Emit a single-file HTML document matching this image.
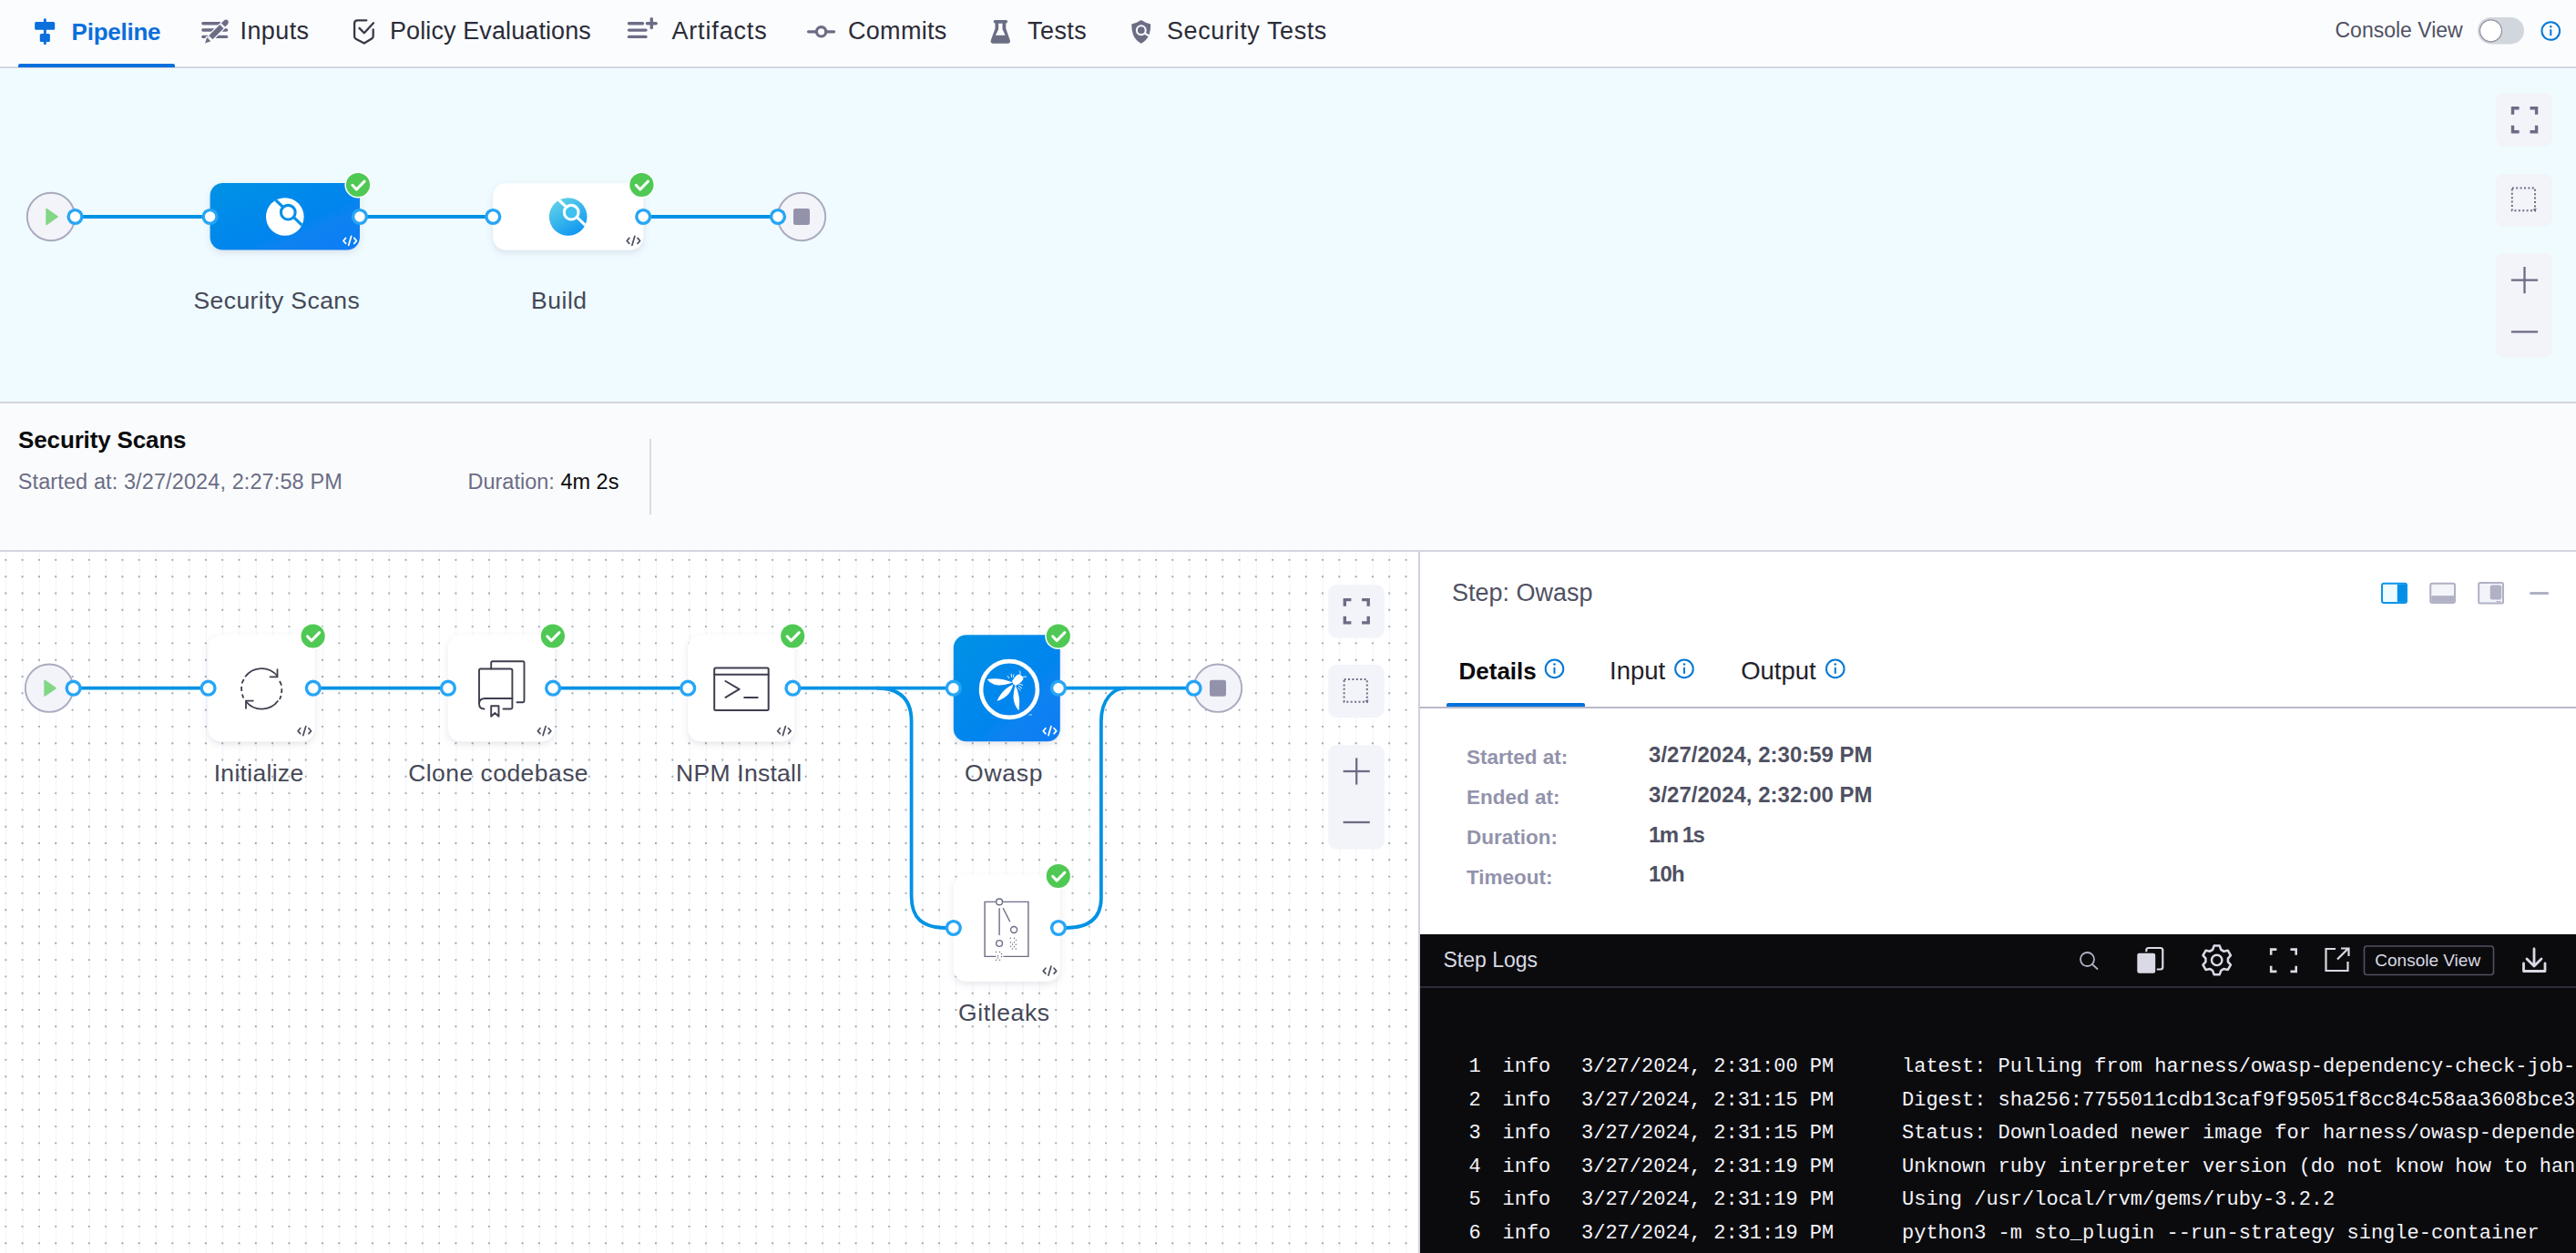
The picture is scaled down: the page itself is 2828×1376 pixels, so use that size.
<!DOCTYPE html>
<html><head><meta charset="utf-8"><title>Pipeline</title>
<style>
html,body{margin:0;padding:0;width:2828px;height:1376px;overflow:hidden;background:#fff;}
body{position:relative;font-family:"Liberation Sans", sans-serif;}
.t{position:absolute;white-space:pre;}
svg{position:absolute;left:0;top:0;overflow:visible;}
</style></head><body>
<div style="position:absolute;left:0px;top:0px;width:2828px;height:74px;background:#fbfcfe"></div>
<div style="position:absolute;left:0px;top:72px;width:2828px;height:1.3px;background:#ffffff"></div>
<div style="position:absolute;left:0px;top:73.3px;width:2828px;height:1.9px;background:#d4d5e1"></div>
<div style="position:absolute;left:0px;top:75.2px;width:2828px;height:366.3px;background:#effbff"></div>
<div style="position:absolute;left:0px;top:441px;width:2828px;height:1.5px;background:#d4d5e1"></div>
<div style="position:absolute;left:0px;top:442.5px;width:2828px;height:162px;background:#fafbfd"></div>
<div style="position:absolute;left:0px;top:604px;width:2828px;height:2px;background:#d4d5e1"></div>
<div style="position:absolute;left:0px;top:606px;width:1557px;height:770px;background:#ffffff"></div>
<div style="position:absolute;left:1557px;top:606px;width:1.5px;height:770px;background:#d0d1de"></div>
<div style="position:absolute;left:1558.5px;top:606px;width:1269.5px;height:420px;background:#ffffff"></div>
<div style="position:absolute;left:1558.5px;top:1026px;width:1269.5px;height:350px;background:#0b0b0d"></div>
<div class="t" style="left:78.6px;top:21.6px;font-size:26px;line-height:26px;color:#0b6fdc;font-weight:700;font-family:'Liberation Sans', sans-serif;letter-spacing:-0.25px">Pipeline</div>
<div class="t" style="left:263.5px;top:21.1px;font-size:27px;line-height:27px;color:#2b2c38;font-weight:400;font-family:'Liberation Sans', sans-serif;letter-spacing:0.4px">Inputs</div>
<div class="t" style="left:428.0px;top:21.1px;font-size:27px;line-height:27px;color:#2b2c38;font-weight:400;font-family:'Liberation Sans', sans-serif;letter-spacing:0.1px">Policy Evaluations</div>
<div class="t" style="left:737.4px;top:21.1px;font-size:27px;line-height:27px;color:#2b2c38;font-weight:400;font-family:'Liberation Sans', sans-serif;letter-spacing:0.85px">Artifacts</div>
<div class="t" style="left:931.0px;top:21.1px;font-size:27px;line-height:27px;color:#2b2c38;font-weight:400;font-family:'Liberation Sans', sans-serif;letter-spacing:0.3px">Commits</div>
<div class="t" style="left:1128.1px;top:21.1px;font-size:27px;line-height:27px;color:#2b2c38;font-weight:400;font-family:'Liberation Sans', sans-serif;letter-spacing:0.4px">Tests</div>
<div class="t" style="left:1281.0px;top:21.1px;font-size:27px;line-height:27px;color:#2b2c38;font-weight:400;font-family:'Liberation Sans', sans-serif;letter-spacing:0.6px">Security Tests</div>
<div style="position:absolute;left:20.2px;top:69.6px;width:171.7px;height:4.2px;background:#0b6fdc;border-radius:2px 2px 0 0"></div>
<svg width="2828" height="80" viewBox="0 0 2828 80">
 <!-- pipeline icon -->
 <g fill="#0b6fdc">
  <rect x="47.9" y="20.2" width="2.9" height="29" rx="1.4"/>
  <rect x="38.2" y="24" width="22" height="8.8" rx="1.5"/>
  <rect x="43.8" y="37" width="11.1" height="8.9" rx="1.5"/>
 </g>
 <!-- inputs icon -->
 <g stroke="#6b6d85" stroke-width="3.4" stroke-linecap="round" fill="none">
  <line x1="222.9" y1="25.8" x2="243" y2="25.8"/>
  <line x1="222.9" y1="33" x2="248.6" y2="33"/>
  <line x1="222.9" y1="40.4" x2="248.6" y2="40.4"/>
 </g>
 <g fill="#6b6d85" stroke="#fafbfd" stroke-width="2.6" paint-order="stroke" stroke-linejoin="round">
  <path d="M229.4 39 L241.4 27.1 L245.5 31.2 L233.4 43.3 Z"/>
  <path d="M225.1 47.6 L227.1 41 L231.4 45.2 Z"/>
  <path d="M242.9 25.5 L246 22.4 Q248.2 20.6 250.1 22.5 Q251.8 24.4 250 26.5 L247.2 29.6 Z"/>
 </g>
 <!-- policy icon -->
 <g stroke="#383946" stroke-width="2.3" stroke-linecap="round" stroke-linejoin="round" fill="none">
  <path d="M402.3 22.3 H392.5 q-3.4 0 -3.4 3.4 V40 q0 1.8 1.6 2.7 L399.8 47.5 L408 42.6 q1.7 -1 1.7 -2.8 V32.5"/>
  <path d="M394.5 30.9 L399.8 36.3 L410 25.3"/>
 </g>
 <!-- artifacts icon -->
 <g stroke="#6b6d85" stroke-width="3.4" stroke-linecap="round" fill="none">
  <line x1="690.5" y1="25.7" x2="705.5" y2="25.7"/>
  <line x1="690.5" y1="33.1" x2="709" y2="33.1"/>
  <line x1="690.5" y1="40.4" x2="709" y2="40.4"/>
  <line x1="715.3" y1="20.8" x2="715.3" y2="30.6"/>
  <line x1="710.4" y1="25.7" x2="720.2" y2="25.7"/>
 </g>
 <!-- commits icon -->
 <g stroke="#6b6d85" stroke-width="3.2" fill="none">
  <circle cx="901.6" cy="34.8" r="5.2"/>
  <line x1="887.5" y1="34.8" x2="896.2" y2="34.8" stroke-linecap="round"/>
  <line x1="907" y1="34.8" x2="915.6" y2="34.8" stroke-linecap="round"/>
 </g>
 <!-- tests icon -->
 <path fill="#6b6d85" fill-rule="evenodd" d="M1092.3 22.1 H1104.9 q1.2 0 1.2 1.7 q0 1.6 -1.8 1.7 V31.2 L1108.9 44.6 q0.6 3.1 -2.6 3.1 H1090.3 q-3.2 0 -2.6 -3.1 L1092.5 31.2 V25.5 q-1.8 -0.1 -1.8 -1.7 q0 -1.7 1.6 -1.7 z M1096.2 25.8 V32 L1093 38.7 H1103.6 L1100.5 32 V25.8 z"/>
 <!-- security tests icon -->
 <path fill="#6b6d85" d="M1252.8 22.1 Q1257.5 25.3 1262.6 26.3 Q1263.3 26.5 1263.2 27.3 Q1263.2 34 1261.5 38.5 Q1258.8 44.5 1252.8 47.8 Q1246.8 44.5 1244.1 38.5 Q1242.3 34 1242.3 27.3 Q1242.2 26.5 1243 26.3 Q1248.1 25.3 1252.8 22.1 Z"/>
 <circle cx="1252.8" cy="33.2" r="4.9" fill="none" stroke="#fafbfd" stroke-width="2.1"/>
 <circle cx="1252.8" cy="33.2" r="2.9" fill="#6b6d85"/>
 <line x1="1256.5" y1="36.5" x2="1262.5" y2="40" stroke="#fafbfd" stroke-width="2.1"/>
 <!-- toggle -->
 <rect x="2720" y="19" width="51" height="29.4" rx="14.7" fill="#d2d7de"/>
 <circle cx="2734.5" cy="33.8" r="12" fill="#ffffff" stroke="#8d8f9d" stroke-width="1.2"/>
 <!-- info -->
 <circle cx="2800.3" cy="34" r="9.8" fill="none" stroke="#0278d5" stroke-width="2"/>
 <rect x="2799.3" y="32.2" width="2" height="7" fill="#0278d5"/>
 <circle cx="2800.3" cy="29.3" r="1.2" fill="#0278d5"/>
</svg>
<div class="t" style="left:2563.5px;top:21.9px;font-size:23px;line-height:23px;color:#4f5162;font-weight:400;font-family:'Liberation Sans', sans-serif;">Console View</div>
<svg width="2828" height="1376" viewBox="0 0 2828 1376">
<defs>
 <linearGradient id="gblue" x1="0" y1="0" x2="1" y2="1">
  <stop offset="0" stop-color="#0092e4"/><stop offset="1" stop-color="#0a7cf6"/>
 </linearGradient>
 <linearGradient id="gcyan" x1="0.2" y1="0" x2="0.8" y2="1">
  <stop offset="0" stop-color="#62d5e6"/><stop offset="1" stop-color="#0b93f3"/>
 </linearGradient>
 <filter id="sh" x="-20%" y="-20%" width="140%" height="150%">
  <feDropShadow dx="0" dy="3" stdDeviation="3.5" flood-color="#606080" flood-opacity="0.16"/>
 </filter>
 <pattern id="dots" x="5.9" y="614.9" width="18.3" height="18.3" patternUnits="userSpaceOnUse">
  <rect x="-1.2" y="-1.2" width="2.4" height="2.4" fill="#9c9dae"/>
 </pattern>
</defs>

<line x1="82.5" y1="238" x2="230.6" y2="238" stroke="#0092e4" stroke-width="3.8"/>
<line x1="395" y1="238" x2="541.3" y2="238" stroke="#0092e4" stroke-width="3.8"/>
<line x1="706.2" y1="238" x2="854" y2="238" stroke="#0092e4" stroke-width="3.8"/>
<circle cx="56" cy="238" r="26.2" fill="#f3f3fa" stroke="#a9aabd" stroke-width="1.9"/><path d="M50.3 229.8 Q50.3 228.4 51.6 229.1 L63.4 237.2 Q64.4 238.0 63.4 238.8 L51.6 246.9 Q50.3 247.6 50.3 246.2 Z" fill="#82d785"/>
<circle cx="880" cy="238" r="26.2" fill="#f3f3fa" stroke="#a9aabd" stroke-width="1.9"/><rect x="871.0" y="229.0" width="18" height="18" rx="2.2" fill="#9293ab"/>
<rect x="230.6" y="201" width="164.4" height="73.5" rx="14" fill="url(#gblue)" filter="url(#sh)"/>
<rect x="541.3" y="201.3" width="164.9" height="73.3" rx="14" fill="#fff" filter="url(#sh)"/>
<g>
 <clipPath id="c1"><circle cx="312.8" cy="238" r="20.8"/></clipPath>
 <circle cx="312.8" cy="238" r="20.8" fill="#fff"/>
 <line x1="298" y1="215.3" x2="336" y2="251.5" stroke="#0490e8" stroke-width="3.2" clip-path="url(#c1)"/>
 <circle cx="316.3" cy="233.2" r="7.85" fill="#fff" stroke="#0490e8" stroke-width="3.1"/>
</g>
<g>
 <clipPath id="c2"><circle cx="623.7" cy="238" r="20.8"/></clipPath>
 <circle cx="623.7" cy="238" r="20.8" fill="url(#gcyan)"/>
 <line x1="609" y1="215.3" x2="647" y2="251.5" stroke="#fff" stroke-width="3.2" clip-path="url(#c2)"/>
 <circle cx="627.2" cy="233.2" r="7.85" fill="#3ec1ee" stroke="#fff" stroke-width="3.1"/>
</g>
<g fill="none" stroke="#ffffff" stroke-width="1.75" stroke-linecap="round" stroke-linejoin="round"><path d="M379.6 261.4 L377.0 264.5 L379.6 267.4"/><path d="M388.8 261.4 L391.4 264.5 L388.8 267.4"/><path d="M385.7 259.3 L382.7 269.3"/></g>
<g fill="none" stroke="#4f5162" stroke-width="1.75" stroke-linecap="round" stroke-linejoin="round"><path d="M690.8 261.4 L688.2 264.5 L690.8 267.4"/><path d="M700.0 261.4 L702.6 264.5 L700.0 267.4"/><path d="M696.9 259.3 L693.9 269.3"/></g>
<circle cx="82.5" cy="238" r="7.4" fill="#fff" stroke="#27a5f5" stroke-width="3.4"/>
<circle cx="230.6" cy="238" r="7.4" fill="#fff" stroke="#27a5f5" stroke-width="3.4"/>
<circle cx="395" cy="238" r="7.4" fill="#fff" stroke="#27a5f5" stroke-width="3.4"/>
<circle cx="541.3" cy="238" r="7.4" fill="#fff" stroke="#27a5f5" stroke-width="3.4"/>
<circle cx="706.2" cy="238" r="7.4" fill="#fff" stroke="#27a5f5" stroke-width="3.4"/>
<circle cx="854" cy="238" r="7.4" fill="#fff" stroke="#27a5f5" stroke-width="3.4"/>
<circle cx="393" cy="203" r="14.6" fill="#fff"/><circle cx="393" cy="203" r="13.1" fill="#4fc954"/><path d="M386.9 203.3 L391.3 208.1 L400.1 199.1" fill="none" stroke="#fff" stroke-width="3" stroke-linecap="round" stroke-linejoin="round"/>
<circle cx="704.4" cy="203" r="14.6" fill="#fff"/><circle cx="704.4" cy="203" r="13.1" fill="#4fc954"/><path d="M698.3 203.3 L702.7 208.1 L711.5 199.1" fill="none" stroke="#fff" stroke-width="3" stroke-linecap="round" stroke-linejoin="round"/>
<rect x="2740" y="102" width="62" height="58.4" rx="9" fill="#f3f3fa"/>
<rect x="2740" y="191" width="62" height="57.5" rx="9" fill="#f3f3fa"/>
<rect x="2740" y="278" width="62" height="114.7" rx="9" fill="#f3f3fa"/>
<g fill="none" stroke="#6b6d85" stroke-width="3.4" stroke-linecap="butt"><path d="M2758.5 125.8 V118.7 H2765.6"/><path d="M2777.5 118.7 H2784.6 V125.8"/><path d="M2758.5 137.7 V144.8 H2765.6"/><path d="M2777.5 144.8 H2784.6 V137.7"/></g>
<rect x="2757.8" y="206.6" width="25.2" height="24.6" fill="none" stroke="#6b6d85" stroke-width="2" stroke-dasharray="2 2.4"/><path d="M2780.5 229.7 l3 3 l1.2 -4 z" fill="#6b6d85"/>
<g stroke="#6b6d85" stroke-width="2.3"><line x1="2756.9" y1="307.6" x2="2786.1" y2="307.6"/><line x1="2771.5" y1="293.0" x2="2771.5" y2="322.2"/></g>
<line x1="2756.9" y1="364.4" x2="2786.1" y2="364.4" stroke="#6b6d85" stroke-width="2.3"/>
</svg>
<div class="t" style="left:212.5px;top:317.1px;font-size:26.5px;line-height:26.5px;color:#464857;font-weight:400;font-family:'Liberation Sans', sans-serif;letter-spacing:0.42px">Security Scans</div>
<div class="t" style="left:583.1px;top:317.1px;font-size:26.5px;line-height:26.5px;color:#464857;font-weight:400;font-family:'Liberation Sans', sans-serif;letter-spacing:0.5px">Build</div>
<div class="t" style="left:20.1px;top:470.3px;font-size:26px;line-height:26px;color:#0b0b0d;font-weight:700;font-family:'Liberation Sans', sans-serif;letter-spacing:-0.15px">Security Scans</div>
<div class="t" style="left:19.8px;top:517.5px;font-size:23.5px;line-height:23.5px;color:#6b6d85;font-weight:400;font-family:'Liberation Sans', sans-serif;letter-spacing:0.1px">Started at: 3/27/2024, 2:27:58 PM</div>
<div class="t" style="left:513.5px;top:517.5px;font-size:23.5px;line-height:23.5px;color:#6b6d85;font-weight:400;font-family:'Liberation Sans', sans-serif;">Duration: <span style="color:#0b0b0d">4m 2s</span></div>
<div style="position:absolute;left:713.3px;top:482px;width:1.5px;height:83px;background:#d9dae5"></div>
<svg width="2828" height="1376" viewBox="0 0 2828 1376">
<defs><pattern id="vl" x="6.3" y="0" width="18.3" height="20" patternUnits="userSpaceOnUse"><rect x="-0.8" y="0" width="1.6" height="20" fill="#e9f5fc"/></pattern></defs>
<rect x="0" y="606" width="1557" height="770" fill="url(#vl)"/>
<path d="M5.35 614.90H1557M5.35 633.20H1557M5.35 651.50H1557M5.35 669.80H1557M5.35 688.10H1557M5.35 706.40H1557M5.35 724.70H1557M5.35 743.00H1557M5.35 761.30H1557M5.35 779.60H1557M5.35 797.90H1557M5.35 816.20H1557M5.35 834.50H1557M5.35 852.80H1557M5.35 871.10H1557M5.35 889.40H1557M5.35 907.70H1557M5.35 926.00H1557M5.35 944.30H1557M5.35 962.60H1557M5.35 980.90H1557M5.35 999.20H1557M5.35 1017.50H1557M5.35 1035.80H1557M5.35 1054.10H1557M5.35 1072.40H1557M5.35 1090.70H1557M5.35 1109.00H1557M5.35 1127.30H1557M5.35 1145.60H1557M5.35 1163.90H1557M5.35 1182.20H1557M5.35 1200.50H1557M5.35 1218.80H1557M5.35 1237.10H1557M5.35 1255.40H1557M5.35 1273.70H1557M5.35 1292.00H1557M5.35 1310.30H1557M5.35 1328.60H1557M5.35 1346.90H1557M5.35 1365.20H1557" stroke="#a3a5ab" stroke-width="1.9" stroke-dasharray="1.9 16.4"/>
<line x1="80.6" y1="755.7" x2="228.6" y2="755.7" stroke="#0092e4" stroke-width="3.8"/>
<line x1="345.6" y1="755.7" x2="491.9" y2="755.7" stroke="#0092e4" stroke-width="3.8"/>
<line x1="608.9" y1="755.7" x2="755.2" y2="755.7" stroke="#0092e4" stroke-width="3.8"/>
<line x1="872.2" y1="755.7" x2="1046.8" y2="755.7" stroke="#0092e4" stroke-width="3.8"/>
<line x1="1163.8" y1="755.7" x2="1310.6" y2="755.7" stroke="#0092e4" stroke-width="3.8"/>
<path d="M962 755.7 C988 755.7 1000.6 768 1000.6 792 V984 C1000.6 1008 1012 1019 1040 1019" fill="none" stroke="#0092e4" stroke-width="3.8"/>
<path d="M1236 755.7 C1222 755.7 1208.9 768 1208.9 792 V986 C1208.9 1008 1196 1019 1170 1019" fill="none" stroke="#0092e4" stroke-width="3.8"/>
<line x1="1040" y1="1019" x2="1046.8" y2="1019" stroke="#0092e4" stroke-width="3.8"/>
<circle cx="54" cy="755.7" r="26.2" fill="#f3f3fa" stroke="#a9aabd" stroke-width="1.9"/><path d="M48.3 747.5 Q48.3 746.1 49.6 746.8 L61.4 754.9 Q62.4 755.7 61.4 756.5 L49.6 764.6 Q48.3 765.3 48.3 763.9 Z" fill="#82d785"/>
<circle cx="1337" cy="755.7" r="26.2" fill="#f3f3fa" stroke="#a9aabd" stroke-width="1.9"/><rect x="1328.0" y="746.7" width="18" height="18" rx="2.2" fill="#9293ab"/>
<rect x="228.6" y="697.3" width="117" height="117" rx="14" fill="#fff" filter="url(#sh)"/>
<rect x="491.9" y="697.3" width="117" height="117" rx="14" fill="#fff" filter="url(#sh)"/>
<rect x="755.2" y="697.3" width="117" height="117" rx="14" fill="#fff" filter="url(#sh)"/>
<rect x="1046.8" y="697.3" width="117" height="117" rx="14" fill="url(#gblue)" filter="url(#sh)"/>
<rect x="1046.8" y="960.8" width="117" height="117" rx="14" fill="#fff" filter="url(#sh)"/>
<g fill="none" stroke="#3d3f4e" stroke-width="1.8" stroke-linecap="butt">
 <path d="M269.2 743.3 A22.2 22.2 0 0 1 304.5 742.5"/>
 <path d="M305.3 769.5 A22.2 22.2 0 0 1 270 770.2"/>
 <path d="M267.7 746 A22.2 22.2 0 0 0 265.6 750.5 M265.2 754 A22.2 22.2 0 0 0 265.3 759 M266 762.5 A22.2 22.2 0 0 0 267.3 766.5" />
 <path d="M307 748 A22.2 22.2 0 0 1 309 752.7 M309.3 756.2 A22.2 22.2 0 0 1 309 761 M308.5 764 A22.2 22.2 0 0 1 307 768" />
 <path d="M304.5 734.4 V743.3 H295.8"/>
 <path d="M270 778.4 V769.7 H278.5"/>
</g>
<g fill="none" stroke="#3d3f4e" stroke-width="1.9" stroke-linecap="round" stroke-linejoin="round">
 <path d="M539.2 734.5 V727.8 q0 -1.6 1.6 -1.6 H573.9 q1.6 0 1.6 1.6 V769.6 q0 1.6 -1.6 1.6 H567.5"/>
 <path d="M526 771 V736.1 q0 -1.6 1.6 -1.6 H560.8 q1.6 0 1.6 1.6 V777 q0 1.5 -1.5 1.5 H552.5"/>
 <path d="M562.4 767 H532.5 q-6.5 0 -6.5 5.8 q0 5.7 5.5 5.7"/>
 <path d="M539.2 786.8 V775.3 H547.5 V786.8 L543.35 783 Z"/>
</g>
<g fill="none" stroke="#3d3f4e" stroke-width="2" stroke-linecap="round" stroke-linejoin="round">
 <rect x="784.2" y="733.4" width="59.5" height="46.6" rx="1.5"/>
 <line x1="784.2" y1="740.7" x2="843.7" y2="740.7"/>
 <path d="M796.5 748 L811.6 756.9 L796.5 765.8"/>
 <line x1="817.2" y1="766.1" x2="831.7" y2="766.1"/>
</g>
<g fill="#fff">
 <circle cx="1108" cy="757" r="30.9" fill="none" stroke="#fff" stroke-width="4.6"/>
 <path d="M1083.7 745.9 Q1097 743.5 1112 749.5 Q1098 754 1091 751.5 Q1086 749.5 1083.7 745.9 Z"/>
 <path d="M1094.5 769.8 Q1100 757 1112.5 751.5 Q1109.5 762 1102 766.5 Q1098 769 1094.5 769.8 Z"/>
 <path d="M1118.5 780.5 Q1113 774 1112.5 766 Q1113 757 1114.8 752.5 Q1118.5 760 1119.2 770 Z"/>
 <path d="M1111 748 Q1115 741.5 1118.3 740.5 Q1122.5 741.5 1123.5 745.5 Q1121 750 1115 753 Q1112 752 1111 748 Z"/>
 <rect x="1129.5" y="784.5" width="3.5" height="0.9" fill="#fff" opacity="0.8"/>
 <g stroke="#fff" stroke-width="0.9" fill="none">
  <path d="M1108 745 L1106 742 M1110.5 744 L1110.2 739.8 M1112.5 744 L1113 740.5"/>
  <path d="M1120 741 Q1120.5 737 1119 736.5 M1122.5 743.5 L1127 743"/>
  <path d="M1118 753 L1122 756 M1118.5 751 L1123 752.5 M1117.5 755 L1120.5 758.5"/>
 </g>
</g>
<g fill="none" stroke="#6b6d85" stroke-width="1.4">
 <path d="M1093.6 990.4 H1081.1 V1050.4 H1093.5 M1100.5 990.4 H1128.9 V1050.4 H1101.5"/>
 <circle cx="1097.1" cy="990.4" r="3.4"/>
 <line x1="1097.1" y1="997.3" x2="1097.1" y2="1027"/>
 <line x1="1101.2" y1="997.3" x2="1108.8" y2="1012.3"/>
 <circle cx="1113.1" cy="1021" r="3.5"/>
 <circle cx="1097.1" cy="1036" r="3.4"/>
</g>
<g fill="#6b6d85">
 <circle cx="1109.2" cy="1030.2" r="0.75"/><circle cx="1113.5" cy="1030.2" r="0.75"/><circle cx="1115.5" cy="1032.5" r="0.75"/>
 <circle cx="1109.5" cy="1034.8" r="0.75"/><circle cx="1113.5" cy="1034.8" r="0.75"/><circle cx="1111.5" cy="1037" r="0.75"/>
 <circle cx="1115.3" cy="1037.2" r="0.75"/><circle cx="1109.5" cy="1039.3" r="0.75"/><circle cx="1113.5" cy="1039.8" r="0.75"/>
 <circle cx="1111.5" cy="1042" r="0.75"/><circle cx="1115.3" cy="1042" r="0.75"/>
 <circle cx="1093.5" cy="1045.5" r="0.75"/><circle cx="1097.5" cy="1045.5" r="0.75"/><circle cx="1099.5" cy="1047.5" r="0.75"/>
 <circle cx="1095.5" cy="1049.8" r="0.75"/><circle cx="1099.5" cy="1050.5" r="0.75"/><circle cx="1093.5" cy="1054.2" r="0.75"/>
 <circle cx="1097.5" cy="1054.2" r="0.75"/><circle cx="1095.5" cy="1052" r="0.75"/>
</g>
<g fill="none" stroke="#4f5162" stroke-width="1.75" stroke-linecap="round" stroke-linejoin="round"><path d="M329.7 799.7 L327.1 802.8 L329.7 805.7"/><path d="M338.9 799.7 L341.5 802.8 L338.9 805.7"/><path d="M335.8 797.6 L332.8 807.6"/></g>
<g fill="none" stroke="#4f5162" stroke-width="1.75" stroke-linecap="round" stroke-linejoin="round"><path d="M593.0 799.7 L590.4 802.8 L593.0 805.7"/><path d="M602.2 799.7 L604.8 802.8 L602.2 805.7"/><path d="M599.1 797.6 L596.1 807.6"/></g>
<g fill="none" stroke="#4f5162" stroke-width="1.75" stroke-linecap="round" stroke-linejoin="round"><path d="M856.3 799.7 L853.7 802.8 L856.3 805.7"/><path d="M865.5 799.7 L868.1 802.8 L865.5 805.7"/><path d="M862.4 797.6 L859.4 807.6"/></g>
<g fill="none" stroke="#ffffff" stroke-width="1.75" stroke-linecap="round" stroke-linejoin="round"><path d="M1147.9 799.7 L1145.3 802.8 L1147.9 805.7"/><path d="M1157.1 799.7 L1159.7 802.8 L1157.1 805.7"/><path d="M1154.0 797.6 L1151.0 807.6"/></g>
<g fill="none" stroke="#4f5162" stroke-width="1.75" stroke-linecap="round" stroke-linejoin="round"><path d="M1147.9 1063.2 L1145.3 1066.3 L1147.9 1069.2"/><path d="M1157.1 1063.2 L1159.7 1066.3 L1157.1 1069.2"/><path d="M1154.0 1061.1 L1151.0 1071.1"/></g>
<circle cx="228.6" cy="755.7" r="7.4" fill="#fff" stroke="#27a5f5" stroke-width="3.4"/>
<circle cx="343.8" cy="755.7" r="7.4" fill="#fff" stroke="#27a5f5" stroke-width="3.4"/>
<circle cx="491.9" cy="755.7" r="7.4" fill="#fff" stroke="#27a5f5" stroke-width="3.4"/>
<circle cx="607.1" cy="755.7" r="7.4" fill="#fff" stroke="#27a5f5" stroke-width="3.4"/>
<circle cx="755.2" cy="755.7" r="7.4" fill="#fff" stroke="#27a5f5" stroke-width="3.4"/>
<circle cx="870.4" cy="755.7" r="7.4" fill="#fff" stroke="#27a5f5" stroke-width="3.4"/>
<circle cx="1046.8" cy="755.7" r="7.4" fill="#fff" stroke="#27a5f5" stroke-width="3.4"/>
<circle cx="1162.0" cy="755.7" r="7.4" fill="#fff" stroke="#27a5f5" stroke-width="3.4"/>
<circle cx="80.6" cy="755.7" r="7.4" fill="#fff" stroke="#27a5f5" stroke-width="3.4"/>
<circle cx="1310.6" cy="755.7" r="7.4" fill="#fff" stroke="#27a5f5" stroke-width="3.4"/>
<circle cx="1046.8" cy="1019" r="7.4" fill="#fff" stroke="#27a5f5" stroke-width="3.4"/>
<circle cx="1162.0" cy="1019" r="7.4" fill="#fff" stroke="#27a5f5" stroke-width="3.4"/>
<circle cx="343.6" cy="698.5" r="14.6" fill="#fff"/><circle cx="343.6" cy="698.5" r="13.1" fill="#4fc954"/><path d="M337.5 698.8 L341.9 703.6 L350.7 694.6" fill="none" stroke="#fff" stroke-width="3" stroke-linecap="round" stroke-linejoin="round"/>
<circle cx="606.9" cy="698.5" r="14.6" fill="#fff"/><circle cx="606.9" cy="698.5" r="13.1" fill="#4fc954"/><path d="M600.8 698.8 L605.2 703.6 L614.0 694.6" fill="none" stroke="#fff" stroke-width="3" stroke-linecap="round" stroke-linejoin="round"/>
<circle cx="870.2" cy="698.5" r="14.6" fill="#fff"/><circle cx="870.2" cy="698.5" r="13.1" fill="#4fc954"/><path d="M864.1 698.8 L868.5 703.6 L877.3 694.6" fill="none" stroke="#fff" stroke-width="3" stroke-linecap="round" stroke-linejoin="round"/>
<circle cx="1161.8" cy="698.5" r="14.6" fill="#fff"/><circle cx="1161.8" cy="698.5" r="13.1" fill="#4fc954"/><path d="M1155.7 698.8 L1160.1 703.6 L1168.9 694.6" fill="none" stroke="#fff" stroke-width="3" stroke-linecap="round" stroke-linejoin="round"/>
<circle cx="1161.8" cy="962" r="14.6" fill="#fff"/><circle cx="1161.8" cy="962" r="13.1" fill="#4fc954"/><path d="M1155.7 962.3 L1160.1 967.1 L1168.9 958.1" fill="none" stroke="#fff" stroke-width="3" stroke-linecap="round" stroke-linejoin="round"/>
<rect x="1458.2" y="642.2" width="61.5" height="58.3" rx="9" fill="#f3f3fa"/>
<rect x="1458.2" y="730" width="61.5" height="58" rx="9" fill="#f3f3fa"/>
<rect x="1458.2" y="818.3" width="61.5" height="114.3" rx="9" fill="#f3f3fa"/>
<g fill="none" stroke="#6b6d85" stroke-width="3.4" stroke-linecap="butt"><path d="M1476.3 665.7 V658.6 H1483.4"/><path d="M1495.1 658.6 H1502.2 V665.7"/><path d="M1476.3 676.8 V683.9 H1483.4"/><path d="M1495.1 683.9 H1502.2 V676.8"/></g>
<rect x="1475.6" y="746.0" width="25.2" height="24.7" fill="none" stroke="#6b6d85" stroke-width="2" stroke-dasharray="2 2.4"/><path d="M1498.3 769.2 l3 3 l1.2 -4 z" fill="#6b6d85"/>
<g stroke="#6b6d85" stroke-width="2.3"><line x1="1474.6" y1="847" x2="1503.8" y2="847"/><line x1="1489.2" y1="832.4" x2="1489.2" y2="861.6"/></g>
<line x1="1474.6" y1="903" x2="1503.8" y2="903" stroke="#6b6d85" stroke-width="2.3"/>
</svg>
<div class="t" style="left:234.7px;top:835.5px;font-size:26.5px;line-height:26.5px;color:#464857;font-weight:400;font-family:'Liberation Sans', sans-serif;letter-spacing:0.3px">Initialize</div>
<div class="t" style="left:448.2px;top:835.5px;font-size:26.5px;line-height:26.5px;color:#464857;font-weight:400;font-family:'Liberation Sans', sans-serif;letter-spacing:0.45px">Clone codebase</div>
<div class="t" style="left:742.1px;top:835.5px;font-size:26.5px;line-height:26.5px;color:#464857;font-weight:400;font-family:'Liberation Sans', sans-serif;letter-spacing:0.25px">NPM Install</div>
<div class="t" style="left:1059.1px;top:835.5px;font-size:26.5px;line-height:26.5px;color:#464857;font-weight:400;font-family:'Liberation Sans', sans-serif;letter-spacing:0.7px">Owasp</div>
<div class="t" style="left:1052.1px;top:1098.5px;font-size:26.5px;line-height:26.5px;color:#464857;font-weight:400;font-family:'Liberation Sans', sans-serif;letter-spacing:0.6px">Gitleaks</div>
<div class="t" style="left:1593.9px;top:637.6px;font-size:27px;line-height:27px;color:#4f5162;font-weight:400;font-family:'Liberation Sans', sans-serif;">Step: Owasp</div>
<svg width="2828" height="1376" viewBox="0 0 2828 1376">
<rect x="2615" y="640.7" width="27" height="21.2" rx="2" fill="#eefbff" stroke="#0b93ea" stroke-width="2"/>
<rect x="2631.8" y="641.7" width="9.2" height="19.2" fill="#0290e6"/>
<rect x="2668.2" y="640.7" width="26.8" height="21.2" rx="2" fill="#f3f3fa" stroke="#b0b1c4" stroke-width="2"/>
<rect x="2669.2" y="654.2" width="24.8" height="6.7" fill="#b0b1c4"/>
<rect x="2721.2" y="640" width="26.8" height="22.6" rx="1.5" fill="#f3f3fa" stroke="#b0b1c4" stroke-width="2"/>
<rect x="2733.7" y="642.5" width="12.5" height="15.9" rx="2" fill="#b0b1c4"/>
<rect x="2740.5" y="660" width="5" height="1.2" fill="#b0b1c4"/>
<line x1="2778.5" y1="651.4" x2="2796.7" y2="651.4" stroke="#b0b1c4" stroke-width="3" stroke-linecap="round"/>
<circle cx="1706.5" cy="734.4" r="9.8" fill="none" stroke="#0278d5" stroke-width="2"/><rect x="1705.5" y="732.8" width="2" height="7" fill="#0278d5"/><circle cx="1706.5" cy="729.5" r="1.25" fill="#0278d5"/>
<circle cx="1849" cy="734.4" r="9.8" fill="none" stroke="#0278d5" stroke-width="2"/><rect x="1848.0" y="732.8" width="2" height="7" fill="#0278d5"/><circle cx="1849" cy="729.5" r="1.25" fill="#0278d5"/>
<circle cx="2014.8" cy="734.4" r="9.8" fill="none" stroke="#0278d5" stroke-width="2"/><rect x="2013.8" y="732.8" width="2" height="7" fill="#0278d5"/><circle cx="2014.8" cy="729.5" r="1.25" fill="#0278d5"/>
</svg>
<div class="t" style="left:1601.5px;top:724.2px;font-size:26px;line-height:26px;color:#0b0b0d;font-weight:700;font-family:'Liberation Sans', sans-serif;">Details</div>
<div class="t" style="left:1767.0px;top:722.9px;font-size:27.5px;line-height:27.5px;color:#22222a;font-weight:400;font-family:'Liberation Sans', sans-serif;">Input</div>
<div class="t" style="left:1911.2px;top:722.9px;font-size:27.5px;line-height:27.5px;color:#22222a;font-weight:400;font-family:'Liberation Sans', sans-serif;">Output</div>
<div style="position:absolute;left:1588px;top:772px;width:151.7px;height:4px;background:#0270d8;border-radius:2px 2px 0 0"></div>
<div style="position:absolute;left:1558.5px;top:776px;width:1269.5px;height:1.5px;background:#b8b9cb"></div>
<div class="t" style="left:1609.9px;top:821.2px;font-size:22.5px;line-height:22.5px;color:#9293ab;font-weight:700;font-family:'Liberation Sans', sans-serif;">Started at:</div>
<div class="t" style="left:1810.1px;top:816.9px;font-size:24px;line-height:24px;color:#4f5162;font-weight:700;font-family:'Liberation Sans', sans-serif;">3/27/2024, 2:30:59 PM</div>
<div class="t" style="left:1609.9px;top:865.0px;font-size:22.5px;line-height:22.5px;color:#9293ab;font-weight:700;font-family:'Liberation Sans', sans-serif;">Ended at:</div>
<div class="t" style="left:1810.1px;top:860.7px;font-size:24px;line-height:24px;color:#4f5162;font-weight:700;font-family:'Liberation Sans', sans-serif;">3/27/2024, 2:32:00 PM</div>
<div class="t" style="left:1609.9px;top:908.8px;font-size:22.5px;line-height:22.5px;color:#9293ab;font-weight:700;font-family:'Liberation Sans', sans-serif;">Duration:</div>
<div class="t" style="left:1810.1px;top:904.5px;font-size:24px;line-height:24px;color:#4f5162;font-weight:700;font-family:'Liberation Sans', sans-serif;letter-spacing:-1.6px">1m 1s</div>
<div class="t" style="left:1609.9px;top:952.6px;font-size:22.5px;line-height:22.5px;color:#9293ab;font-weight:700;font-family:'Liberation Sans', sans-serif;">Timeout:</div>
<div class="t" style="left:1810.1px;top:948.3px;font-size:24px;line-height:24px;color:#4f5162;font-weight:700;font-family:'Liberation Sans', sans-serif;letter-spacing:-0.9px">10h</div>
<div style="position:absolute;left:1558.5px;top:1083px;width:1269.5px;height:2px;background:#2c2d38"></div>
<div class="t" style="left:1584.5px;top:1043.0px;font-size:23px;line-height:23px;color:#d9dae5;font-weight:400;font-family:'Liberation Sans', sans-serif;">Step Logs</div>
<svg width="2828" height="1376" viewBox="0 0 2828 1376">
<circle cx="2291.5" cy="1053.5" r="7.5" fill="none" stroke="#b0b1c4" stroke-width="1.8"/><line x1="2297" y1="1059" x2="2302.5" y2="1064" stroke="#b0b1c4" stroke-width="1.8" stroke-linecap="round"/>
<rect x="2356.3" y="1041" width="18" height="23.5" rx="2.5" fill="none" stroke="#d9dae5" stroke-width="2.2"/>
<rect x="2345.5" y="1046" width="21.5" height="23.5" rx="3" fill="#d9dae5" stroke="#0b0b0d" stroke-width="1.6"/>
<path d="M2429.09 1043.00 L2430.63 1038.60 L2436.77 1038.60 L2438.31 1043.00 A12.3 12.3 0 0 1 2441.27 1044.71 L2445.85 1043.84 L2448.92 1049.16 L2445.88 1052.69 A12.3 12.3 0 0 1 2445.88 1056.11 L2448.92 1059.64 L2445.85 1064.96 L2441.27 1064.09 A12.3 12.3 0 0 1 2438.31 1065.80 L2436.77 1070.20 L2430.63 1070.20 L2429.09 1065.80 A12.3 12.3 0 0 1 2426.13 1064.09 L2421.55 1064.96 L2418.48 1059.64 L2421.52 1056.11 A12.3 12.3 0 0 1 2421.52 1052.69 L2418.48 1049.16 L2421.55 1043.84 L2426.13 1044.71 A12.3 12.3 0 0 1 2429.09 1043.00 Z" fill="none" stroke="#d9dae5" stroke-width="2.5" stroke-linejoin="round"/>
<circle cx="2433.7" cy="1054.4" r="5.7" fill="none" stroke="#d9dae5" stroke-width="2.4"/>
<g fill="none" stroke="#d9dae5" stroke-width="2.6" stroke-linecap="butt"><path d="M2493.2 1048.8 V1042.6 H2499.4"/><path d="M2514.5 1042.6 H2520.7 V1048.8"/><path d="M2493.2 1060.7 V1066.9 H2499.4"/><path d="M2514.5 1066.9 H2520.7 V1060.7"/></g>
<path d="M2564 1042 H2553.5 V1066 H2577.5 V1056" fill="none" stroke="#d9dae5" stroke-width="2.2"/>
<path d="M2566 1053.5 L2578 1041.5 M2570 1041.5 H2578.5 V1050" fill="none" stroke="#d9dae5" stroke-width="2.2"/>
<rect x="2595.5" y="1039" width="142" height="31.5" rx="3" fill="none" stroke="#4f5162" stroke-width="1.6"/>
<path d="M2782 1042 V1060 M2774 1053 L2782 1061 L2790 1053" fill="none" stroke="#d9dae5" stroke-width="2.8" stroke-linecap="round" stroke-linejoin="round"/>
<path d="M2770.5 1058 V1066.5 H2794 V1058" fill="none" stroke="#d9dae5" stroke-width="2.8" stroke-linecap="round" stroke-linejoin="round"/>
</svg>
<div class="t" style="left:2607.3px;top:1044.7px;font-size:19px;line-height:19px;color:#d9dae5;font-weight:400;font-family:'Liberation Sans', sans-serif;">Console View</div>
<div style="position:absolute;left:1558.5px;top:1085px;width:1269.5px;height:291px;overflow:hidden">
<div class="t" style="left:54.0px;top:75.9px;font-size:22px;line-height:22px;color:#f3f3fa;font-family:'Liberation Mono', monospace">1</div>
<div class="t" style="left:91.0px;top:75.9px;font-size:22px;line-height:22px;color:#f3f3fa;font-family:'Liberation Mono', monospace">info</div>
<div class="t" style="left:177.5px;top:75.9px;font-size:22px;line-height:22px;color:#f3f3fa;font-family:'Liberation Mono', monospace">3/27/2024, 2:31:00 PM</div>
<div class="t" style="left:529.5px;top:75.9px;font-size:22px;line-height:22px;color:#f3f3fa;font-family:'Liberation Mono', monospace">latest: Pulling from harness/owasp-dependency-check-job-runner</div>
<div class="t" style="left:54.0px;top:112.5px;font-size:22px;line-height:22px;color:#f3f3fa;font-family:'Liberation Mono', monospace">2</div>
<div class="t" style="left:91.0px;top:112.5px;font-size:22px;line-height:22px;color:#f3f3fa;font-family:'Liberation Mono', monospace">info</div>
<div class="t" style="left:177.5px;top:112.5px;font-size:22px;line-height:22px;color:#f3f3fa;font-family:'Liberation Mono', monospace">3/27/2024, 2:31:15 PM</div>
<div class="t" style="left:529.5px;top:112.5px;font-size:22px;line-height:22px;color:#f3f3fa;font-family:'Liberation Mono', monospace">Digest: sha256:7755011cdb13caf9f95051f8cc84c58aa3608bce3b1a2d9f0e7c</div>
<div class="t" style="left:54.0px;top:149.1px;font-size:22px;line-height:22px;color:#f3f3fa;font-family:'Liberation Mono', monospace">3</div>
<div class="t" style="left:91.0px;top:149.1px;font-size:22px;line-height:22px;color:#f3f3fa;font-family:'Liberation Mono', monospace">info</div>
<div class="t" style="left:177.5px;top:149.1px;font-size:22px;line-height:22px;color:#f3f3fa;font-family:'Liberation Mono', monospace">3/27/2024, 2:31:15 PM</div>
<div class="t" style="left:529.5px;top:149.1px;font-size:22px;line-height:22px;color:#f3f3fa;font-family:'Liberation Mono', monospace">Status: Downloaded newer image for harness/owasp-dependency-check-job-runner:latest</div>
<div class="t" style="left:54.0px;top:185.7px;font-size:22px;line-height:22px;color:#f3f3fa;font-family:'Liberation Mono', monospace">4</div>
<div class="t" style="left:91.0px;top:185.7px;font-size:22px;line-height:22px;color:#f3f3fa;font-family:'Liberation Mono', monospace">info</div>
<div class="t" style="left:177.5px;top:185.7px;font-size:22px;line-height:22px;color:#f3f3fa;font-family:'Liberation Mono', monospace">3/27/2024, 2:31:19 PM</div>
<div class="t" style="left:529.5px;top:185.7px;font-size:22px;line-height:22px;color:#f3f3fa;font-family:'Liberation Mono', monospace">Unknown ruby interpreter version (do not know how to handle): >=3.2.0</div>
<div class="t" style="left:54.0px;top:222.3px;font-size:22px;line-height:22px;color:#f3f3fa;font-family:'Liberation Mono', monospace">5</div>
<div class="t" style="left:91.0px;top:222.3px;font-size:22px;line-height:22px;color:#f3f3fa;font-family:'Liberation Mono', monospace">info</div>
<div class="t" style="left:177.5px;top:222.3px;font-size:22px;line-height:22px;color:#f3f3fa;font-family:'Liberation Mono', monospace">3/27/2024, 2:31:19 PM</div>
<div class="t" style="left:529.5px;top:222.3px;font-size:22px;line-height:22px;color:#f3f3fa;font-family:'Liberation Mono', monospace">Using /usr/local/rvm/gems/ruby-3.2.2</div>
<div class="t" style="left:54.0px;top:258.9px;font-size:22px;line-height:22px;color:#f3f3fa;font-family:'Liberation Mono', monospace">6</div>
<div class="t" style="left:91.0px;top:258.9px;font-size:22px;line-height:22px;color:#f3f3fa;font-family:'Liberation Mono', monospace">info</div>
<div class="t" style="left:177.5px;top:258.9px;font-size:22px;line-height:22px;color:#f3f3fa;font-family:'Liberation Mono', monospace">3/27/2024, 2:31:19 PM</div>
<div class="t" style="left:529.5px;top:258.9px;font-size:22px;line-height:22px;color:#f3f3fa;font-family:'Liberation Mono', monospace">python3 -m sto_plugin --run-strategy single-container</div>
</div>
</body></html>
